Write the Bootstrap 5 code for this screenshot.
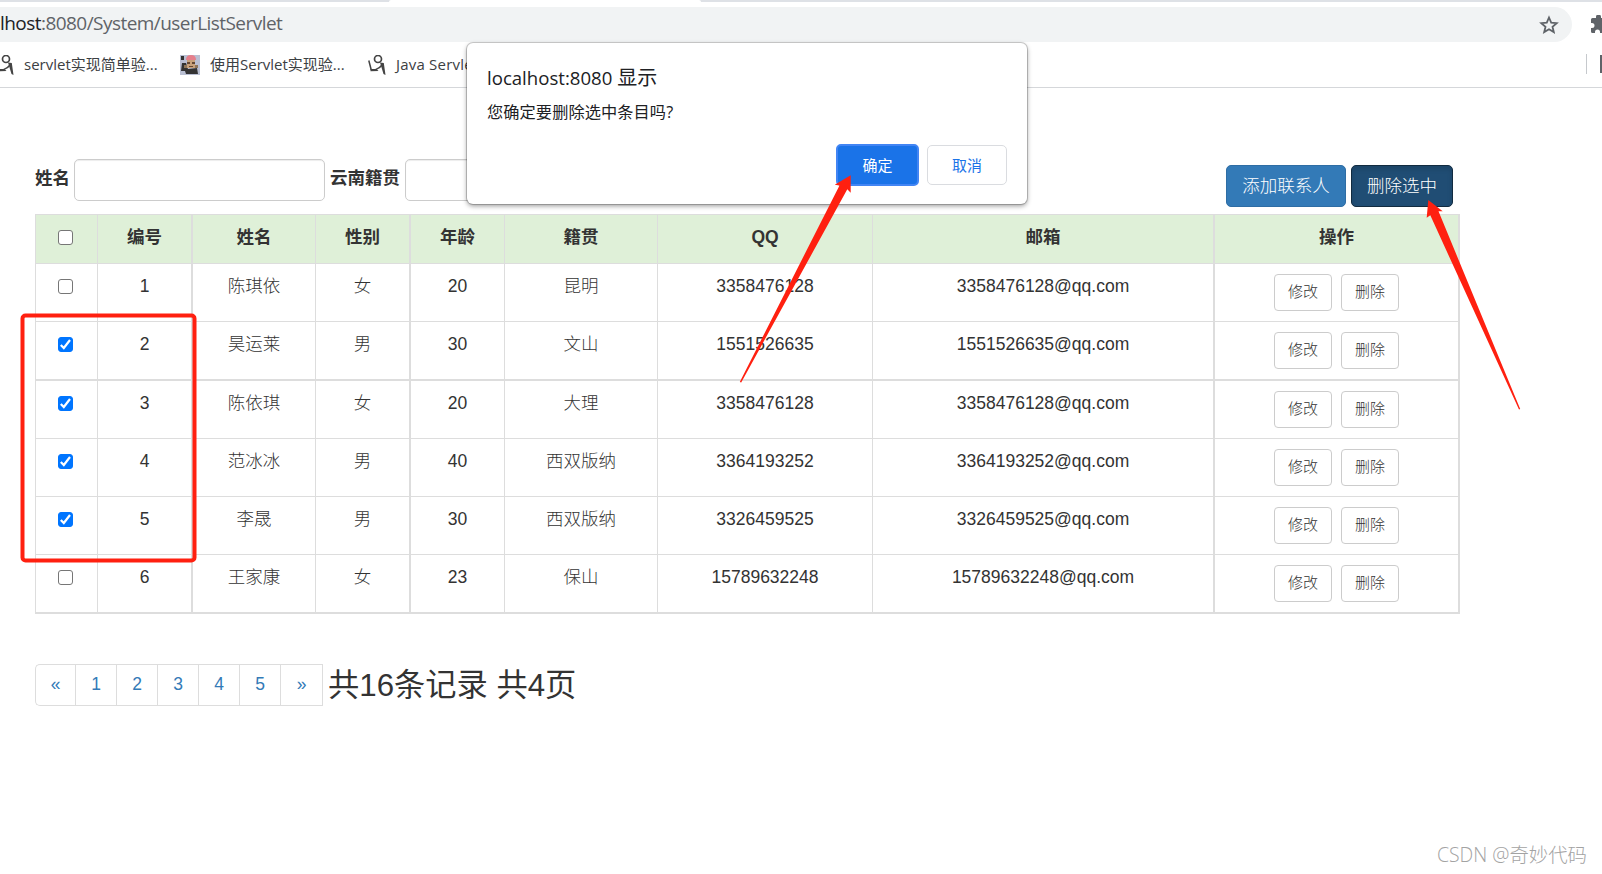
<!DOCTYPE html>
<html lang="zh-CN">
<head>
<meta charset="utf-8">
<title>userListServlet</title>
<meta name="viewport" content="width=device-width, initial-scale=1">
<link href="https://cdn.jsdelivr.net/npm/bootstrap@5.3.0/dist/css/bootstrap.min.css" rel="stylesheet">
<style>
  body { height: 874px; overflow: hidden; color: #333; background: #fff; font: 17.5px/25px "Liberation Sans", "Noto Sans CJK SC", sans-serif; }
  .ui { font-family: "Open Sans", "Noto Sans CJK SC", sans-serif; }
  /* browser chrome */
  .tabstrip { height: 2px; background: #dee1e6; }
  .tab-active { width: 312px; margin-left: 389px; background: #fff; border-radius: 2px 2px 0 0; }
  .toolbar { height: 40px; padding-top: 5px; }
  .omnibox { width: 1572px; height: 35px; background: #f1f3f4; border-radius: 0 18px 18px 0; padding-right: 13px; font-size: 19px; letter-spacing: -.55px; color: #5f6368; }
  .omnibox span { margin-top: -2px; }
  .omnibox b { font-weight: 400; color: #202124; }
  .bookmarks { height: 46px; border-bottom: 1px solid #d5d7da; font-size: 15px; color: #3c4043; }
  .bookmarks span { white-space: nowrap; }
  .bm1 { width: 180px; } .bm2 { width: 188px; }
  .bm-end { width: 44px; height: 20px; margin-top: -1px; border-left: 1px solid #c6c9cd; }
  .bm-end i { width: 2px; height: 18px; background: #5f6368; margin-left: 13px; }
  /* page */
  .page { padding-left: 35px; width: 1460px; }
  .searchbar { height: 126px; padding-top: 71px; font-weight: 700; }
  .searchbar .form-control { width: 251px; height: 42px; border: 1px solid #ccc; border-radius: 5px; box-shadow: inset 0 1px 1px rgba(0,0,0,.075); }
  .searchbar label { margin-top: -3px; }
  .tools { margin: 6px 7px 0 0; gap: 5px; }
  .tools .btn { width: 102px; height: 42px; padding: 0; font-size: 17.5px; line-height: 38px; border-radius: 5px; color: #fff; background: #337ab7; border-color: #2e6da4; }
  .tools .btn.add { width: 120px; }
  .tools .btn.pressed { background: #204d74; border-color: #122b40; box-shadow: inset 0 3px 5px rgba(0,0,0,.125); }
  .grid-table { width: 1425px; table-layout: fixed; border-collapse: separate; border-spacing: 0; border: solid #ddd; border-width: 1px 0 0 1px; text-align: center; margin: 0; }
  .grid-table th, .grid-table td { height: 58px; padding: 10px 0 0; vertical-align: top; border: solid #ddd; border-width: 0 1px 1px 0; line-height: 25px; }
  .grid-table td, .grid-table .btn, .tools .btn { font-weight: 300; }
  .grid-table th { height: 49px; background: #dff0d8; }
  .grid-table .thick { border-right-width: 2px; }
  .grid-table .tall td { height: 59px; border-bottom-width: 2px; }
  .grid-table .form-check-input { width: 15px; height: 15px; margin: 5px auto 0 22px; border: 1px solid #767676; border-radius: 3px; display: block; background-size: 15px; box-shadow: none; }
  .grid-table .form-check-input:checked { background-color: #0075ff; border-color: #0075ff; background-image: url("data:image/svg+xml,%3csvg xmlns='http://www.w3.org/2000/svg' viewBox='0 0 15 15'%3e%3cpath fill='none' stroke='%23fff' stroke-width='2.2' d='M2.800 8l3 3 6.200-8'/%3e%3c/svg%3e"); }
  .grid-table .btn { width: 58px; height: 37px; padding: 0; font-size: 15px; line-height: 34px; border: 1px solid #ccc; border-radius: 4px; color: #333; background: #fff; }
  .pager { margin-top: 50px; height: 42px; }
  .pager .page-link { width: 41px; height: 42px; padding: 0 0 2px; margin: 0; border: 1px solid #ddd; border-right: 0; color: #337ab7; font-size: 17.5px; line-height: 38px; text-align: center; border-radius: 0; }
  .pager li:first-child .page-link { width: 40px; border-radius: 5px 0 0 5px; }
  .pager li:last-child .page-link { border-right: 1px solid #ddd; width: 43px; border-radius: 0; }
  .total { font-size: 31.25px; line-height: 44px; margin-left: 5px; white-space: nowrap; }
  /* overlays */
  .confirm { left: 467px; top: 43px; width: 560px; height: 161px; background: #fff; border-radius: 6px; padding: 20px 20px 0; box-shadow: 0 0 0 1px rgba(0,0,0,.18), 0 2px 5px rgba(0,0,0,.4); color: #202124; }
  .confirm h1 { font-size: 18.6px; line-height: 30px; margin: 0; font-weight: 400; white-space: nowrap; }
  .confirm h1 span { font-size: 20px; line-height: 20px; }
  .confirm p { font-size: 16.2px; line-height: 24px; margin: 7px 0 0; letter-spacing: .1px; }
  .confirm .actions { gap: 9px; margin-top: 20px; }
  .confirm .btn { width: 80px; height: 40px; font-size: 15px; line-height: 38px; padding: 0; border-radius: 5px; border: 1px solid #dadce0; color: #1a73e8; background: #fff; }
  .confirm .btn.ok { width: 83px; height: 42px; margin-right: -1px; background: #1a73e8; border: 2px solid #4285f4; color: #fff; line-height: 37px; }
  .marks { left: 0; top: 0; pointer-events: none; }
  .watermark { right: 15px; bottom: 6px; font-size: 19.4px; line-height: 26px; color: #a3a3a3; white-space: nowrap; font-weight: 300; }
</style>
</head>
<body class="position-relative">
<svg class="d-none"><symbol id="figure" viewBox="0 0 20 20"><circle cx="10" cy="4" r="3.500" fill="none" stroke="#444" stroke-width="1.700"/><path fill="none" stroke="#444" stroke-width="1.500" d="M.8 5.500L3.200 14.800M7.500 14.600Q12 13 15 9"/><path fill="#444" d="M2.500 14h6l2 2-8 .2zM12 7.500l3.800.5 1.700 12-2-1z"/></symbol></svg>
<header class="ui">
  <div class="tabstrip d-flex"><div class="tab-active"></div></div>
  <div class="toolbar d-flex align-items-start">
    <div class="omnibox d-flex align-items-center justify-content-between flex-shrink-0">
      <span><b>lhost</b>:8080/System/userListServlet</span>
      <svg width="20" height="20" viewBox="0 0 20 20" fill="none" stroke="#5f6368" stroke-width="1.800"><path d="M10 2.500l2.200 5.100 5.500.5-4.200 3.600 1.300 5.400L10 14.200l-4.800 2.900 1.300-5.400L2.300 8.100l5.500-.5z"/></svg>
    </div>
    <svg class="ms-auto mt-2 flex-shrink-0" width="12" height="20" viewBox="0 0 12 20" fill="#5f6368"><path d="M1 4.500q0-1.500 1.500-1.500H6V2a2.500 2.500 0 0 1 5 0v1h4v15H10v-1a2.500 2.500 0 0 0-5 0v1H2.500Q1 18 1 16.500V13h1a2.500 2.500 0 0 0 0-5H1z"/></svg>
  </div>
  <div class="bookmarks d-flex align-items-center">
    <div class="bm1 d-flex align-items-center">
      <svg class="flex-shrink-0" style="margin-left:-4px" width="20" height="20"><use href="#figure"/></svg>
      <span style="margin-left:8px">servlet实现简单验...</span>
    </div>
    <div class="bm2 d-flex align-items-center">
      <svg class="flex-shrink-0" width="20" height="20" viewBox="0 0 20 20"><path fill="#b9bfd2" d="M0 0h20v20H0z"/><path fill="#333" d="M1 1h3v4H1zM2 8h4l2 6 9-1 1 6H6l-1-3H1z"/><path fill="#c7a17a" d="M7 5h8v8H7z"/><path fill="#e67f8b" d="M6 5q0-5 5-5t5 5z"/><path fill="#654934" d="M7 7h3v2H7zm5 0h3v2h-3zM9 11h4v1H9z"/><path fill="#8d765b" d="M4 10h3v3H4zm11 0h3v3h-3z"/></svg>
      <span style="margin-left:10px">使用Servlet实现验...</span>
    </div>
    <svg class="flex-shrink-0" width="20" height="20"><use href="#figure"/></svg>
    <span style="margin-left:8px;letter-spacing:.2px">Java Servlet</span>
    <div class="bm-end ms-auto d-flex align-items-center" style="margin-right:-28px"><i></i></div>
  </div>
</header>

<main class="page">
  <form class="searchbar d-flex align-items-start">
    <div class="d-flex align-items-center"><label for="n">姓名</label><input id="n" class="form-control" style="margin:0 5px 0 4px"><label for="h">云南籍贯</label><input id="h" class="form-control" style="margin-left:5px"></div>
    <div class="tools d-flex ms-auto"><button type="button" class="btn add">添加联系人</button><button type="button" class="btn pressed">删除选中</button></div>
  </form>
  <table class="grid-table">
    <colgroup><col style="width:62px"><col style="width:95px"><col style="width:123px"><col style="width:95px"><col style="width:94px"><col style="width:153px"><col style="width:215px"><col style="width:342px"><col style="width:245px"></colgroup>
    <thead><tr><th><input class="form-check-input" type="checkbox"></th><th class="thick">编号</th><th>姓名</th><th class="thick">性别</th><th>年龄</th><th>籍贯</th><th>QQ</th><th class="thick">邮箱</th><th class="thick">操作</th></tr></thead>
    <tbody id="rows"></tbody>
  </table>
  <nav class="pager d-flex">
    <ul class="pagination m-0">
      <li><a class="page-link">«</a></li><li><a class="page-link">1</a></li><li><a class="page-link">2</a></li><li><a class="page-link">3</a></li><li><a class="page-link">4</a></li><li><a class="page-link">5</a></li><li><a class="page-link">»</a></li>
    </ul>
    <span class="total">共16条记录 共4页</span>
  </nav>
</main>

<section class="confirm ui position-absolute">
  <h1>localhost:8080 <span>显示</span></h1>
  <p>您确定要删除选中条目吗?</p>
  <div class="actions d-flex justify-content-end align-items-center"><button class="btn ok">确定</button><button class="btn ms-0">取消</button></div>
</section>

<svg class="marks position-absolute" width="1602" height="874" viewBox="0 0 1602 874" fill="#ff2010">
  <rect x="22.500" y="315.500" width="172" height="245" rx="3" fill="none" stroke="#ff2010" stroke-width="4"/>
  <path d="M850.700 175.300L834.700 184.700L839.500 185.500L739.800 382L741.200 382.500L847.300 189.300L850.700 192.700z"/>
  <path d="M1428.300 200L1442.700 211.300L1438.500 211.300L1520.200 409L1519 409.600L1430.300 215.300L1426.700 217.700z"/>
</svg>
<div class="watermark ui position-absolute">CSDN @奇妙代码</div>

<script>
  const people = [
    [1, '陈琪依', '女', 20, '昆明', '3358476128'],
    [2, '昊运莱', '男', 30, '文山', '1551526635'],
    [3, '陈依琪', '女', 20, '大理', '3358476128'],
    [4, '范冰冰', '男', 40, '西双版纳', '3364193252'],
    [5, '李晟', '男', 30, '西双版纳', '3326459525'],
    [6, '王家康', '女', 23, '保山', '15789632248']
  ];
  document.getElementById('rows').innerHTML = people.map(([id, name, sex, age, home, qq]) => `
    <tr class="${id === 2 || id === 6 ? 'tall' : ''}">
      <td><input class="form-check-input" type="checkbox" ${id > 1 && id < 6 ? 'checked' : ''}></td>
      <td class="thick">${id}</td><td>${name}</td><td class="thick">${sex}</td><td>${age}</td><td>${home}</td>
      <td>${qq}</td><td class="thick">${qq}@qq.com</td>
      <td class="thick"><div class="d-flex justify-content-center" style="gap:9px"><a class="btn">修改</a><a class="btn">删除</a></div></td>
    </tr>`).join('');
</script>
<script src="https://cdn.jsdelivr.net/npm/bootstrap@5.3.0/dist/js/bootstrap.bundle.min.js"></script>
</body>
</html>
